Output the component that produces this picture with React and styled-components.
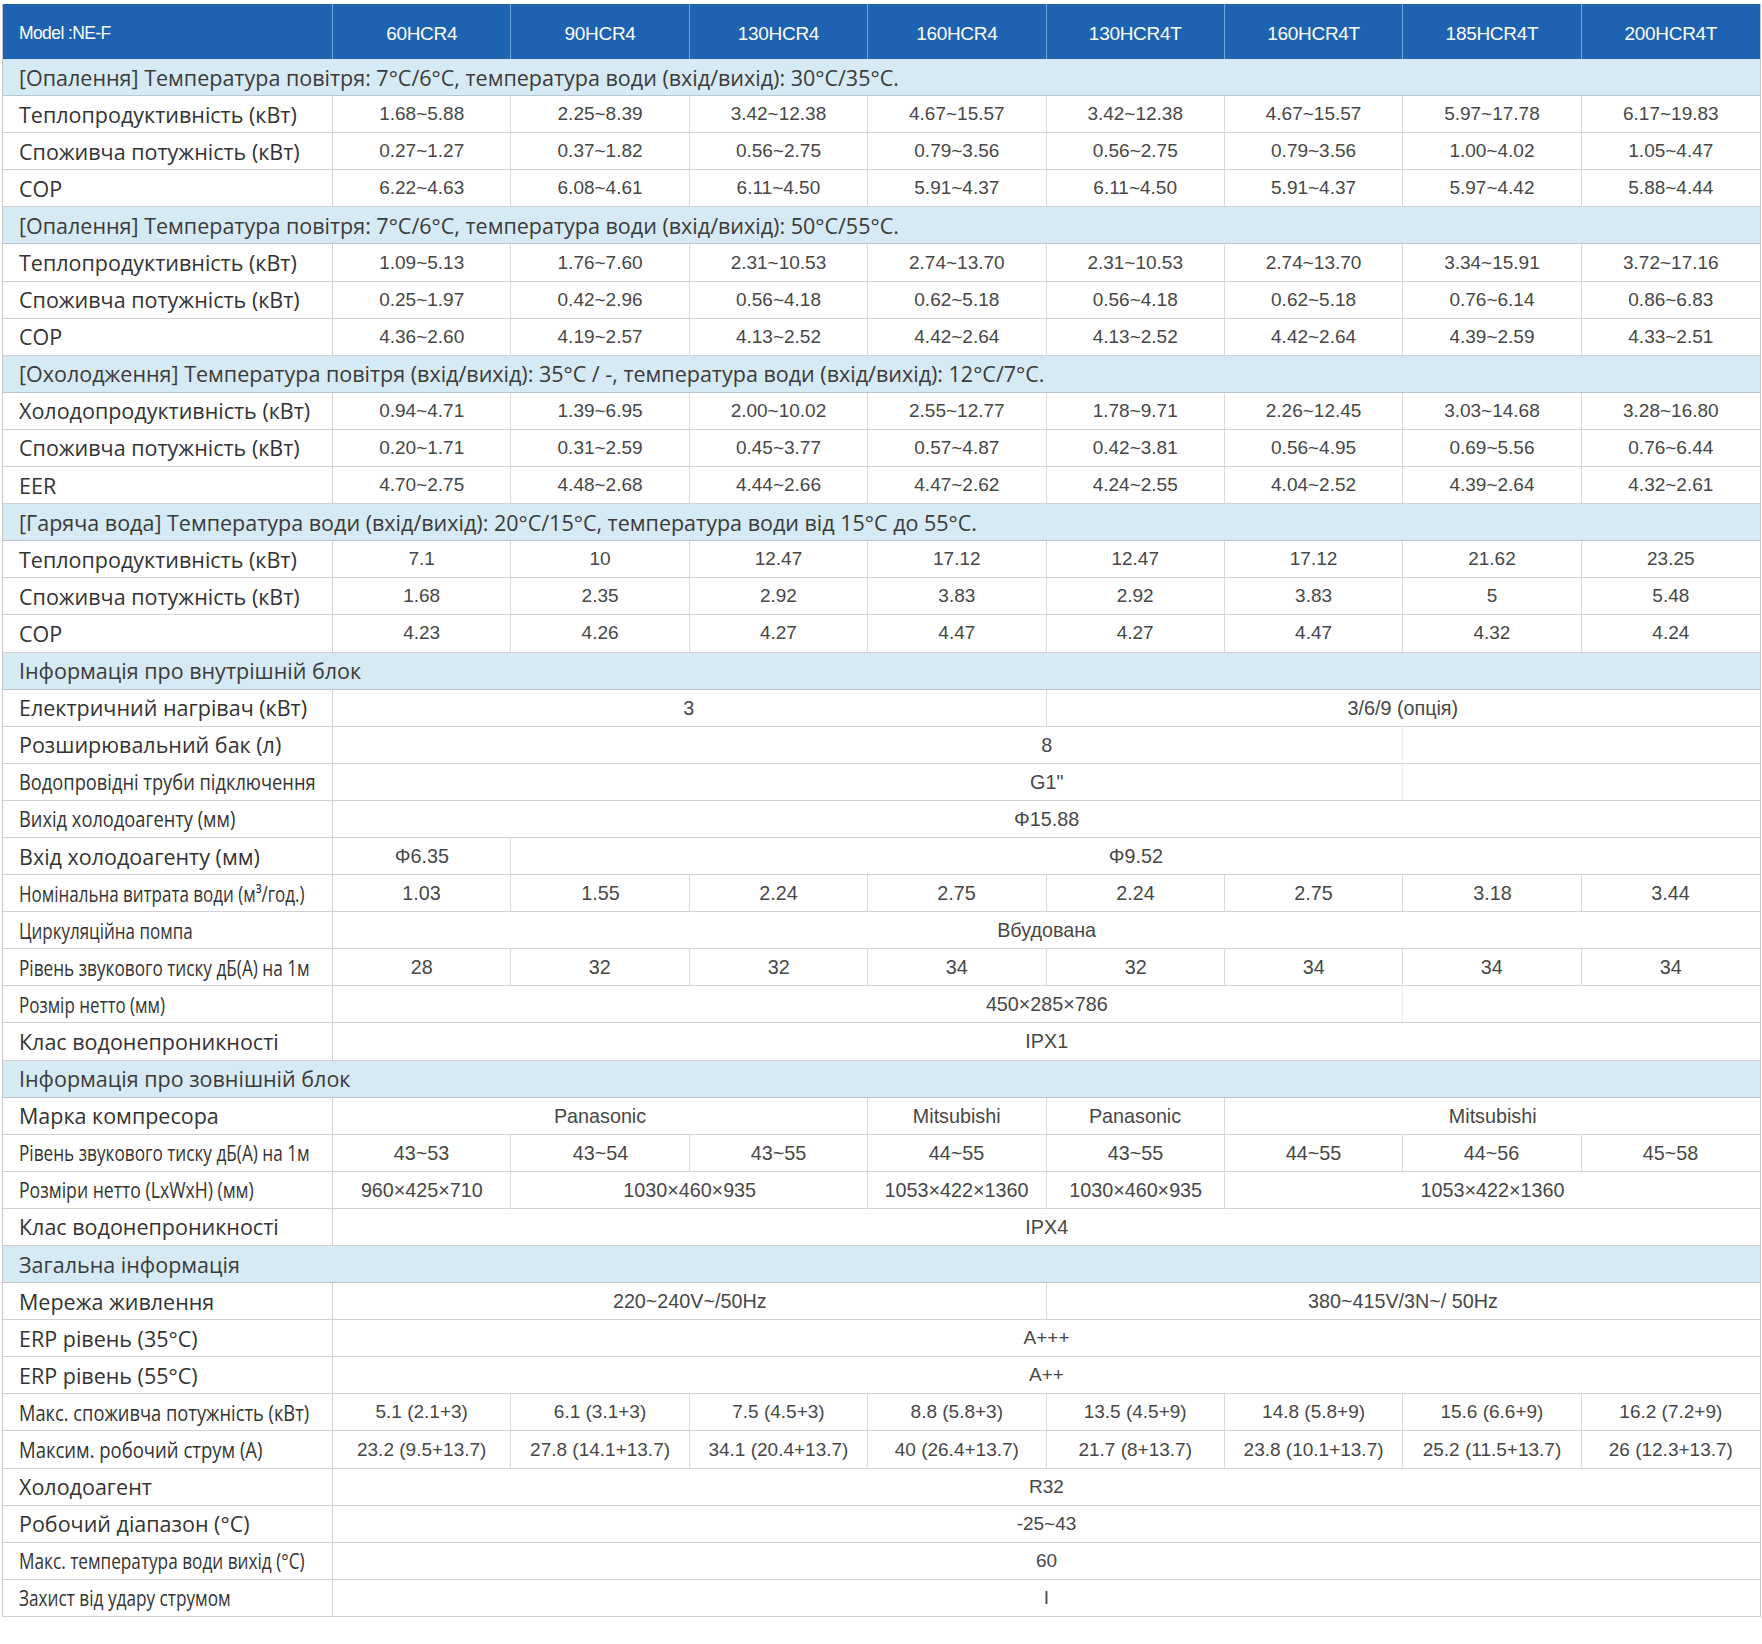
import React from "react";
import styled, { createGlobalStyle } from "styled-components";

const GlobalStyle = createGlobalStyle`
  body {
    margin: 0;
    background: #ffffff;
  }
`;

const Table = styled.div`
  width: 1757px;
  margin: 4px 0 0 2px;
  border-left: 1px solid #c9c9c9;
  border-right: 1px solid #c9c9c9;
`;

const Row = styled.div`
  display: grid;
  grid-template-columns: 330px repeat(8, 1fr);
  height: ${p => (p.$head ? 55 : 37.1)}px;
`;

const HeadCell = styled.div`
  grid-column: span ${p => p.$span || 1};
  display: flex;
  align-items: center;
  justify-content: ${p => (p.$left ? "flex-start" : "center")};
  padding: 4px 0 0 ${p => (p.$left ? 16 : 0)}px;
  background: #1d63b1;
  border-right: 1px solid #6ea9dd;
  color: #ffffff;
  font-family: "Liberation Sans", Arial, sans-serif;
  font-size: ${p => (p.$left ? 17.5 : 19)}px;
  letter-spacing: ${p => (p.$left ? -0.6 : -0.3)}px;
  &:last-child {
    border-right: none;
  }
`;

const Section = styled.div`
  grid-column: 1 / -1;
  display: flex;
  align-items: center;
  padding-left: 16px;
  background: #d6eaf5;
  border-bottom: 1px solid #b9c6cf;
  color: #3a3a3a;
  font-family: "Open Sans", "Noto Sans", sans-serif;
  font-size: 21.5px;
  white-space: nowrap;
`;

const Label = styled.div`
  display: flex;
  align-items: center;
  padding-left: 16px;
  border-right: 1px solid #d2d2d2;
  border-bottom: 1px solid #d2d2d2;
  color: #333333;
  font-family: "Open Sans", "Noto Sans", sans-serif;
  font-size: 21.5px;
  white-space: nowrap;
  overflow: hidden;
`;

const Cell = styled.div`
  grid-column: span ${p => p.$span || 1};
  display: flex;
  align-items: center;
  justify-content: center;
  border-right: 1px solid #d9d9d9;
  border-bottom: 1px solid #d2d2d2;
  color: #474747;
  font-family: "Liberation Sans", Arial, sans-serif;
  font-size: ${p => (p.$narrow ? 21 : 19)}px;
  white-space: nowrap;
  background-image: ${p =>
    p.$mark
      ? "linear-gradient(to right, transparent calc(75% - 1px), #ececec calc(75% - 1px), #ececec 75%, transparent 75%)"
      : "none"};
  &:last-child {
    border-right: none;
  }
`;

const Squeeze = styled.span`
  display: inline-block;
  transform: scaleX(${p => p.$x || 1});
  transform-origin: ${p => (p.$origin === "left" ? "left center" : "center")};
`;

const models = [
  "60HCR4",
  "90HCR4",
  "130HCR4",
  "160HCR4",
  "130HCR4T",
  "160HCR4T",
  "185HCR4T",
  "200HCR4T"
];

const each = list => list.map(v => [v, 1]);

const sections = [
  {
    title:
      "[Опалення] Температура повітря: 7°C/6°C, температура води (вхід/вихід): 30°C/35°C.",
    rows: [
      {
        label: "Теплопродуктивність (кВт)",
        cells: each(["1.68~5.88", "2.25~8.39", "3.42~12.38", "4.67~15.57", "3.42~12.38", "4.67~15.57", "5.97~17.78", "6.17~19.83"])
      },
      {
        label: "Споживча потужність (кВт)",
        cells: each(["0.27~1.27", "0.37~1.82", "0.56~2.75", "0.79~3.56", "0.56~2.75", "0.79~3.56", "1.00~4.02", "1.05~4.47"])
      },
      {
        label: "COP",
        cells: each(["6.22~4.63", "6.08~4.61", "6.11~4.50", "5.91~4.37", "6.11~4.50", "5.91~4.37", "5.97~4.42", "5.88~4.44"])
      }
    ]
  },
  {
    title:
      "[Опалення] Температура повітря: 7°C/6°C, температура води (вхід/вихід): 50°C/55°C.",
    rows: [
      {
        label: "Теплопродуктивність (кВт)",
        cells: each(["1.09~5.13", "1.76~7.60", "2.31~10.53", "2.74~13.70", "2.31~10.53", "2.74~13.70", "3.34~15.91", "3.72~17.16"])
      },
      {
        label: "Споживча потужність (кВт)",
        cells: each(["0.25~1.97", "0.42~2.96", "0.56~4.18", "0.62~5.18", "0.56~4.18", "0.62~5.18", "0.76~6.14", "0.86~6.83"])
      },
      {
        label: "COP",
        cells: each(["4.36~2.60", "4.19~2.57", "4.13~2.52", "4.42~2.64", "4.13~2.52", "4.42~2.64", "4.39~2.59", "4.33~2.51"])
      }
    ]
  },
  {
    title:
      "[Охолодження] Температура повітря (вхід/вихід): 35°C / -, температура води (вхід/вихід): 12°C/7°C.",
    rows: [
      {
        label: "Холодопродуктивність (кВт)",
        cells: each(["0.94~4.71", "1.39~6.95", "2.00~10.02", "2.55~12.77", "1.78~9.71", "2.26~12.45", "3.03~14.68", "3.28~16.80"])
      },
      {
        label: "Споживча потужність (кВт)",
        cells: each(["0.20~1.71", "0.31~2.59", "0.45~3.77", "0.57~4.87", "0.42~3.81", "0.56~4.95", "0.69~5.56", "0.76~6.44"])
      },
      {
        label: "EER",
        cells: each(["4.70~2.75", "4.48~2.68", "4.44~2.66", "4.47~2.62", "4.24~2.55", "4.04~2.52", "4.39~2.64", "4.32~2.61"])
      }
    ]
  },
  {
    title:
      "[Гаряча вода] Температура води (вхід/вихід): 20°C/15°C, температура води від 15°C до 55°C.",
    rows: [
      {
        label: "Теплопродуктивність (кВт)",
        cells: each(["7.1", "10", "12.47", "17.12", "12.47", "17.12", "21.62", "23.25"])
      },
      {
        label: "Споживча потужність (кВт)",
        cells: each(["1.68", "2.35", "2.92", "3.83", "2.92", "3.83", "5", "5.48"])
      },
      {
        label: "COP",
        cells: each(["4.23", "4.26", "4.27", "4.47", "4.27", "4.47", "4.32", "4.24"])
      }
    ]
  },
  {
    title: "Інформація про внутрішній блок",
    rows: [
      { label: "Електричний нагрівач (кВт)", narrowVal: true, cells: [["3", 4], ["3/6/9 (опція)", 4]] },
      { label: "Розширювальний бак (л)", narrowVal: true, mark: true, cells: [["8", 8]] },
      { label: "Водопровідні труби підключення", squeeze: 0.85, narrowVal: true, mark: true, cells: [["G1\"", 8]] },
      { label: "Вихід холодоагенту (мм)", squeeze: 0.85, narrowVal: true, cells: [["Φ15.88", 8]] },
      { label: "Вхід холодоагенту (мм)", narrowVal: true, cells: [["Φ6.35", 1], ["Φ9.52", 7]] },
      {
        label: "Номінальна витрата води (м³/год.)",
        squeeze: 0.79,
        narrowVal: true,
        cells: each(["1.03", "1.55", "2.24", "2.75", "2.24", "2.75", "3.18", "3.44"])
      },
      { label: "Циркуляційна помпа", squeeze: 0.79, narrowVal: true, cells: [["Вбудована", 8]] },
      {
        label: "Рівень звукового тиску дБ(А) на 1м",
        squeeze: 0.8,
        narrowVal: true,
        cells: each(["28", "32", "32", "34", "32", "34", "34", "34"])
      },
      { label: "Розмір нетто (мм)", squeeze: 0.79, narrowVal: true, mark: true, cells: [["450×285×786", 8]] },
      { label: "Клас водонепроникності", narrowVal: true, cells: [["IPX1", 8]] }
    ]
  },
  {
    title: "Інформація про зовнішній блок",
    rows: [
      {
        label: "Марка компресора",
        narrowVal: true,
        cells: [["Panasonic", 3], ["Mitsubishi", 1], ["Panasonic", 1], ["Mitsubishi", 3]]
      },
      {
        label: "Рівень звукового тиску дБ(А) на 1м",
        squeeze: 0.8,
        narrowVal: true,
        cells: each(["43~53", "43~54", "43~55", "44~55", "43~55", "44~55", "44~56", "45~58"])
      },
      {
        label: "Розміри нетто (LxWxH) (мм)",
        squeeze: 0.82,
        narrowVal: true,
        cells: [
          ["960×425×710", 1],
          ["1030×460×935", 2],
          ["1053×422×1360", 1],
          ["1030×460×935", 1],
          ["1053×422×1360", 3]
        ]
      },
      { label: "Клас водонепроникності", narrowVal: true, cells: [["IPX4", 8]] }
    ]
  },
  {
    title: "Загальна інформація",
    rows: [
      { label: "Мережа живлення", narrowVal: true, cells: [["220~240V~/50Hz", 4], ["380~415V/3N~/ 50Hz", 4]] },
      { label: "ERP рівень (35°C)", cells: [["A+++", 8]] },
      { label: "ERP рівень (55°C)", cells: [["A++", 8]] },
      {
        label: "Макс. споживча потужність (кВт)",
        squeeze: 0.85,
        cells: each(["5.1 (2.1+3)", "6.1 (3.1+3)", "7.5 (4.5+3)", "8.8 (5.8+3)", "13.5 (4.5+9)", "14.8 (5.8+9)", "15.6 (6.6+9)", "16.2 (7.2+9)"])
      },
      {
        label: "Максим. робочий струм (А)",
        squeeze: 0.86,
        cells: each(["23.2 (9.5+13.7)", "27.8 (14.1+13.7)", "34.1 (20.4+13.7)", "40 (26.4+13.7)", "21.7 (8+13.7)", "23.8 (10.1+13.7)", "25.2 (11.5+13.7)", "26 (12.3+13.7)"])
      },
      { label: "Холодоагент", cells: [["R32", 8]] },
      { label: "Робочий діапазон (°C)", cells: [["-25~43", 8]] },
      { label: "Макс. температура води вихід (°C)", squeeze: 0.8, cells: [["60", 8]] },
      { label: "Захист від удару струмом", squeeze: 0.8, cells: [["I", 8]] }
    ]
  }
];

export default function App() {
  return (
    <>
      <GlobalStyle />
      <Table>
        <Row $head>
          <HeadCell $left>Model :NE-F</HeadCell>
          {models.map(m => (
            <HeadCell key={m}>{m}</HeadCell>
          ))}
        </Row>
        {sections.map(section => (
          <React.Fragment key={section.title}>
            <Row>
              <Section>{section.title}</Section>
            </Row>
            {section.rows.map((row, i) => (
              <Row key={i}>
                <Label>
                  <Squeeze $x={row.squeeze || 1} $origin="left">
                    {row.label}
                  </Squeeze>
                </Label>
                {row.cells.map(([text, span], j) => (
                  <Cell key={j} $span={span} $narrow={row.narrowVal} $mark={row.mark}>
                    <Squeeze $x={row.narrowVal ? 0.94 : 1}>{text}</Squeeze>
                  </Cell>
                ))}
              </Row>
            ))}
          </React.Fragment>
        ))}
      </Table>
    </>
  );
}
